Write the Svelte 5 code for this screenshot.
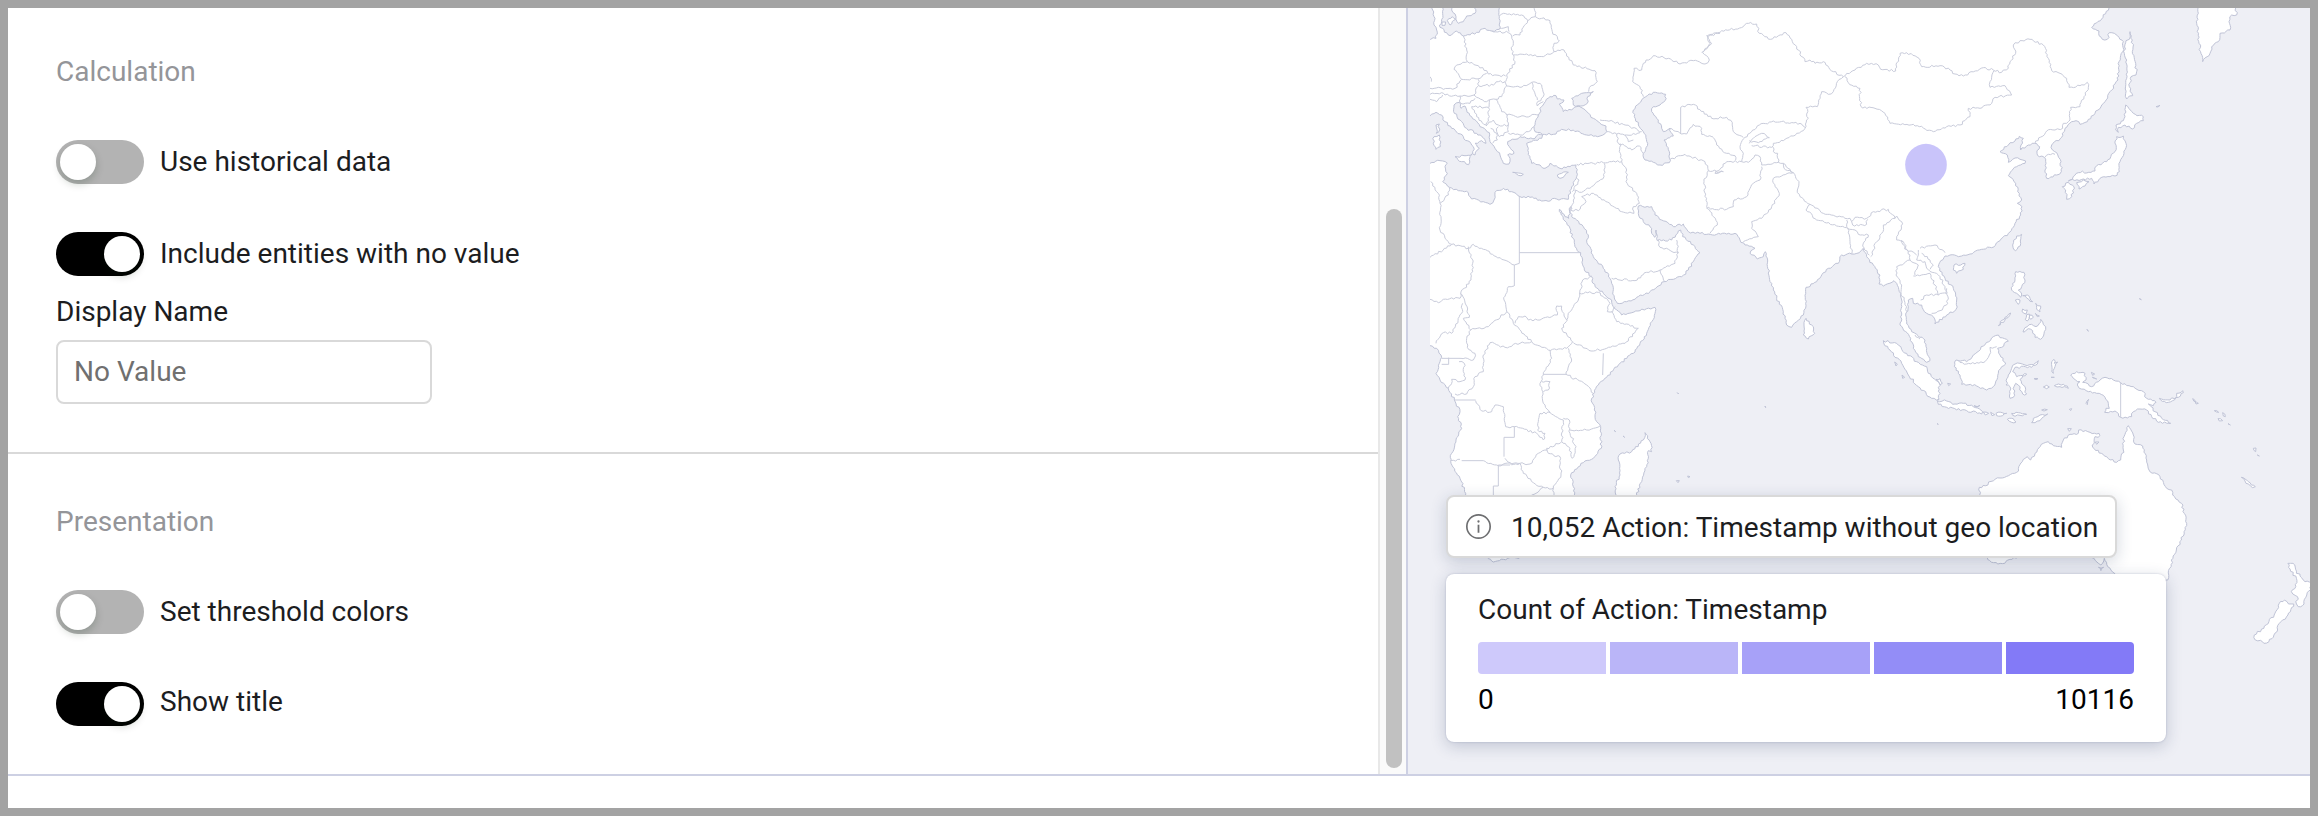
<script>
  // Map outlines are kept per survey sheet; each sheet has its own origin
  // and horizontal scale on the common canvas (3 units per pixel).
  const sheets = {
    nw: [0, 0, 1], n: [1020, 0, 1], ne: [1920, 0, 1],
    w: [0, 720, 1], c: [1020, 720, 1], e: [1920, 720, 1],
    sw: [30, 1440, 1], se: [1260, 1440, 1.0295]
  };

  function points(src) {
    let sheet = sheets.nw;
    const out = [];
    for (const token of src.trim().split(/\s+/)) {
      if (sheets[token]) { sheet = sheets[token]; continue; }
      const [x, y] = token.split(',').map(Number);
      out.push([sheet[0] + x * sheet[2], sheet[1] + y]);
    }
    return out;
  }

  // Adds small natural irregularities to long coast and border segments.
  function roughen(pts, closed) {
    const out = [];
    const total = closed ? pts.length : pts.length - 1;
    for (let i = 0; i < total; i++) {
      const [x1, y1] = pts[i];
      const [x2, y2] = pts[(i + 1) % pts.length];
      out.push([x1, y1]);
      const dx = x2 - x1, dy = y2 - y1, len = Math.hypot(dx, dy);
      if (len < 12 || len > 220) continue;
      const n = Math.floor(len / 6);
      for (let k = 1; k < n; k++) {
        const seed = Math.sin((x1 + y2) * 12.9898 + k * 78.233) * 43758.5453;
        const off = (seed - Math.floor(seed) - 0.5) * 7;
        out.push([x1 + (dx * k) / n - (dy / len) * off, y1 + (dy * k) / n + (dx / len) * off]);
      }
    }
    if (!closed) out.push(pts[pts.length - 1]);
    return out;
  }

  const toPath = (pts, closed) =>
    'M' + pts.map(([x, y]) => `${x.toFixed(1)},${y.toFixed(1)}`).join('L') + (closed ? 'Z' : '');
  const shape = (src) => src.split('|').map((s) => toPath(roughen(points(s), true), true)).join('');
  const lines = (src) => src.split('|').map((s) => toPath(roughen(points(s), false), false)).join('');
  const straight = (src) => src.split('|').map((s) => toPath(points(s), false)).join('');

  const mainland = shape(`nw 150,-60 ne 335,-60 335,0 327,24 305,57 275,82 297,93 297,107 307,118 322,118 328,98 343,100 370,125 368,155 357,185 354,240 335,270 315,305 285,340 262,365 240,373 228,362 215,365 195,385 187,400 185,412 155,435 153,443 170,458 183,485 184,515 170,525 140,535 135,510 138,490 133,472 118,470 111,460 119,440 103,430 85,435 62,450 63,435 70,415 58,409 45,423 25,435 0,455 22,465 25,487 45,474 60,478 77,483 75,490 50,500 25,527 42,545 58,580 65,600 52,610 66,620 62,645 45,670 25,700 0,722
    n 875,743 845,748 810,762 c 785,48 775,50 750,45 735,48 715,80 735,115 760,145 770,180 768,208 740,225 705,252 700,230 680,220 665,195 640,190 638,175 625,180 625,200 617,225 620,245 635,275 650,283 675,300 680,325 690,362 680,367 655,350 640,325 632,295 600,255 605,225 605,180 598,155 590,130 582,122 550,138 537,132 540,105 520,75 500,50 490,25 478,38 455,42 425,45 415,70 385,85 350,125 318,142 317,190 310,225 290,245 275,262 260,255 250,215 230,175 210,125 203,60 196,35 190,50 172,57 150,40 165,25 135,15 120,0
    n 105,700 80,702 50,703 0,700 nw 985,695 970,672 940,680 905,660 885,645 875,620 835,618 835,640 850,665 875,685 875,700 884,712 888,690 892,722 935,720 962,690 968,710 1000,735 1020,758
    w 1000,65 985,90 965,110 940,118 912,125 870,155 830,172 800,185 772,190 765,180 755,130 750,115 730,85 700,50 690,20 680,0 nw 685,705 670,680 650,660 635,650 632,620 626,655 615,650 598,628 604,645 620,668 640,715 w 643,0 645,20 662,38 668,60 673,90 695,110 705,140 730,160 755,180 763,205 785,225 840,212 885,202 885,220 860,280 840,310 820,340 780,370 740,412 715,435 695,475 703,510 710,545 722,560 724,625 700,655 670,668 632,705 640,740 643,765
    sw 600,60 560,150 500,220 440,234 400,238 370,246 355,236 300,150 287,45 w 317,760 300,715 273,670 275,640 288,600 305,565 293,530 300,515 283,480 265,445 240,420 228,400 238,370 243,345 230,325 210,317 150,317`);

  const seas = shape(`nw 180,-20 220,-20 218,30 225,55 222,75 230,90 228,115 212,118 180,118
    |nw 250,-20 248,40 240,82 270,107 290,93 310,108 350,97 375,85 395,93 418,88 418,24 418,-20 345,-20 345,40 320,48 310,65 295,70 288,50 275,30 285,-20
    |nw 180,345 210,348 228,337 245,345 255,365 275,385 310,410 340,440 338,462 345,465 358,445 345,430 365,422 378,430 374,418 350,400 320,385 305,365 283,340 282,315 298,307 303,325 315,318 320,330 335,350 360,380 388,398 390,425 405,445 420,465 430,490 447,492 450,475 443,465 462,460 448,440 443,425 465,418 480,410 500,415 525,415 535,403 548,405 545,415 515,425 500,430 505,445 510,475 515,490 540,495 555,505 570,490 600,505 630,500 648,495 650,530 635,560 625,598 590,597 545,603 510,592 480,590 455,575 430,565 405,577 402,600 390,613 370,605 335,597 325,578 295,572 268,562 248,545 262,520 255,500 262,490 240,482 210,490 180,490
    |nw 522,380 535,345 545,320 570,290 588,287 592,297 612,300 598,312 610,335 650,320 663,322 680,335 700,355 720,370 738,378 740,395 720,408 680,405 640,390 605,388 580,403 547,403 525,395
    |nw 635,295 665,280 700,275 683,290 682,310 662,318 640,315
    |nw 887,277 917,283 915,302 900,315 880,320 875,335 890,355 905,385 910,395 930,385 940,408 912,420 928,455 928,488 900,495 880,487 855,480 850,460 863,430 850,395 835,375 823,350 820,330 845,300 862,287`);

  const islands = shape(`nw 285,470 312,467 336,462 328,478 326,494 305,485|nw 222,410 238,405 241,440 228,448 220,430|nw 228,375 238,372 237,395 229,400|nw 458,517 475,519 490,523 475,526|nw 592,525 605,520 625,517 612,530 600,535|nw 262,62 277,50 287,58 270,75|nw 246,66 257,66 255,76 246,76
    |ne 390,95 397,120 397,155 410,215 408,225 393,230 388,260 398,287 388,288 380,297 377,280 380,235 380,180 373,160 378,122 388,118
    |ne 377,315 400,340 430,350 430,362 410,370 397,387 375,375 355,382 355,397 347,390 348,375 370,362 375,350
    |ne 350,410 370,408 378,430 372,460 360,485 358,515 345,528 330,530 300,535 282,552 275,535 250,537 205,543 235,518 285,513 290,497 320,485 345,455
    |ne 187,560 205,547 222,560 215,590 200,598 197,570|ne 230,548 250,540 267,545 255,558 237,567|ne 50,708 65,703 62,730 47,752 38,735
    |ne 600,-20 595,40 590,70 597,130 608,185 630,160 635,140 655,125 660,100 690,90 687,65 695,45 710,45 707,24 705,-20|ne 468,320 480,316 474,321
    |c 762,75 795,70 790,88 770,100 760,90|c 318,235 335,255 344,280 325,297 310,285 312,255
    |c 550,302 590,310 605,328 650,365 680,380 685,400 718,430 717,478 695,475 655,440 625,405 605,370 570,330 552,312
    |c 712,482 740,483 765,492 790,490 820,500 848,515 845,522 800,512 740,502 715,493
    |c 768,360 800,365 820,345 850,318 880,290 895,285 900,293 925,303 905,322 893,325 900,345 917,372 905,380 895,400 880,440 860,450 830,438 785,433 780,405 763,380
    |c 584,366 592,372 588,378|c 606,405 614,412 608,415|c 708,418 720,416 727,430 720,434|c 743,430 752,432 746,437|c 822,497 840,496 832,500|c 850,516 866,520 856,525|c 872,517 884,524 876,527|c 888,520 920,520 908,527 890,527|c 922,538 940,536 948,546 935,547
    |c 895,257 915,232 932,219 924,233
    |e 35,385 38,376 60,370 75,375 100,374 115,362 112,372 95,382 45,382 38,395 50,410 80,402 60,418 70,435 80,462 68,462 55,435 47,430 42,440 40,472 30,475 30,440 18,435 25,405
    |e 35,520 55,518 80,523 60,526 38,526|e 95,548 100,535 120,525 143,522 125,535 105,548|e 125,510 142,509 132,513
    |e 155,365 162,358 163,370 173,366 165,380 160,400 156,382|e 130,441 140,436 148,441 140,446|e 163,437 190,433 205,445 180,440|e 102,416 114,416 108,419|e 153,412 163,412|e 258,490 266,478 262,494|e 208,508 215,506 212,512|e 274,397 284,402 278,406|e 277,412 290,417
    |e 212,405 230,395 255,400 258,420 248,427 265,432 275,440 300,420 315,412 340,420 362,428 400,440 430,455 440,475 468,487 460,497 445,492 465,515 485,535 512,550 475,547 455,530 440,510 420,507 400,515 395,530 362,532 345,513 325,518 314,517 318,505 328,505 325,490 315,472 290,460 265,455 238,445 232,435 240,425 220,415
    |e 478,475 510,480 530,470 530,460 548,452 550,458 535,472 505,487 487,484
    |e 578,476 595,490 588,492|e 643,512 656,517|e 668,518 676,530 670,528|e 654,536 668,542 658,543|e 684,551 691,555|e 760,625 768,624 767,635|e 772,645 778,648|e 724,712 735,717 766,740 758,743 738,730
    |e 47,95 72,97 75,120 65,140 55,150 65,165 62,172 50,160 35,150 38,130 45,120|e 68,167 82,165 98,185 90,184 80,174|e 46,180 60,180 55,193|e 68,207 82,210 78,222 70,219|e 107,190 122,198 120,216 110,208|e 80,224 88,222 82,243 76,239|e 90,225 100,232 92,238|e 106,220 118,228 112,230
    |e 122,238 128,245 137,260 133,275 122,298 105,292 98,272 85,266 75,275 69,276 75,263 95,253 108,260 118,250
    |e 203,566 214,566 208,574|e 286,606 297,606 290,613
    |e 0,714 50,697 75,655 82,650 92,660 105,640 130,610 145,605 160,617 185,622 190,600 210,583 235,580 236,570 270,577 297,580 295,592 285,590 278,622 320,650 350,667 362,660 370,630 372,590 385,557 400,585 405,612 428,618 440,660 447,690 480,710 500,745 515,750 518,765
    se 1145,45 1170,70 1178,100 1185,130 1170,180 1155,210 1145,235 1135,265 1130,300 1000,320 975,280 955,260 945,235 935,255 915,235 880,215 760,215 670,238 655,250 635,252 605,238 590,180 582,45 c 838,742 845,743 885,718
    |se 928,262 943,262 935,272
    |se 1382,465 1410,445 1440,405 1455,370 1470,360 1482,372 1497,372 1480,405 1455,430 1450,450 1425,485 1410,490 1400,481 1385,480
    |se 1480,250 1495,250 1505,280 1515,282 1520,293 1530,305 1555,305 1535,345 1527,372 1510,380 1505,372 1508,350 1490,335 1503,320 1505,295 1482,262
    |w 855,578 870,605 875,635 865,632 860,680 845,725 830,765 sw 790,80 760,80 740,60 w 768,765 765,740 780,705 775,660 780,642 815,635 850,600
    |w 952,458 956,462|w 762,571 767,575|w 789,588 794,592|w 983,708 990,710 985,713|w 949,722 958,722 954,728|c 195,498 197,503|c 711,551 715,553|e 418,176 424,179|e 261,268 265,274`);

  const borders = lines(`nw 418,48 430,40 485,45 503,62 480,105 458,108|nw 418,85 445,80 447,95|nw 395,93 445,98 455,108 460,130 455,150 465,185 440,225 437,245|nw 524,20 526,50 503,62|nw 526,50 570,62 577,95 598,123 582,130 582,155|nw 460,165 500,162 550,170 582,155 612,150 640,195 705,212 712,245 688,262 686,275
    |nw 310,108 320,150 322,185 355,197 380,212 385,222 437,228|nw 322,185 290,195 282,208 305,238 360,235 380,220|nw 305,238 285,265 250,268 235,262 210,265|nw 355,238 357,258 400,255 415,245 435,245 440,258 425,290 408,298 380,305 350,292 342,285 355,258|nw 210,283 245,278 255,285 300,288 342,285|nw 210,298 230,305 248,285|nw 300,288 302,310 330,310 345,295|nw 440,258 480,262 515,247 545,255 550,290 530,310 532,318 550,305|nw 515,247 532,300|nw 408,298 425,335 440,345 480,350 535,345|nw 335,320 385,322 388,350 378,375 350,350 335,320|nw 388,300 387,322|nw 442,345 445,375 415,375 400,360 378,378|nw 445,375 445,395 418,410 410,395 415,380|nw 445,400 480,405 505,395 522,380|nw 392,385 410,400 412,420 398,430|nw 210,230 214,245
    |nw 720,360 760,365 810,380 845,395|nw 740,395 770,402 800,405 840,398|nw 770,402 775,430 800,440 815,450 838,438 850,460|nw 795,405 805,425 820,420|nw 780,430 778,455 785,485 800,510 798,545 830,580 838,610 820,620 822,640 785,635 700,580 665,590 678,605 655,632 632,630|nw 650,493 700,490 755,485 785,485|nw 733,490 732,530 695,560 665,577 645,570 640,600 632,628|nw 650,535 657,540 637,575
    |nw 850,290 840,260 818,245 822,205 845,210 850,190 880,167 925,175 960,192 1000,182 1035,192 1048,180 1028,158 1050,130 1040,107 1080,100|nw 930,385 965,402 980,402 1000,373 1025,385 1025,403 1055,410 n 35,408 50,435 80,460 105,467 107,480|nw 962,322 1000,313 1055,355 n 35,355 80,352 97,368 100,395 130,412
    |nw 930,478 975,463 1035,485 1045,512 1090,515 n 45,520 80,485 125,485 145,487 165,465 180,470 185,495 235,487|nw 1045,512 1032,545 1040,620 1060,650 1072,675 1050,700|nw 1040,625 n 80,628 100,620 102,600 140,590 160,550 180,540 185,500|n 250,490 280,518 220,535 225,560 238,580 215,620 185,655 155,665 155,685 175,710 130,725
    |n 5,157 35,130 22,108 60,97 130,80 140,70 170,72 178,100 212,118 258,98 290,140 315,185 330,180 345,190 370,185 400,215 430,230 465,210 500,190 535,195 542,208 587,213 600,160 620,158 657,175 665,200 720,197 750,210 765,222 790,228 850,203 880,210 905,217 925,205 930,185 947,160 940,135 960,122 ne 90,118 130,135 145,175 155,212 180,220 200,235 207,262 240,257 262,247 265,262 252,290 240,320 212,322 210,360 200,370 190,370 188,385 165,390 140,393 105,430|ne 135,472 145,463 165,463
    |n 435,230 445,248 480,265 483,320 525,325 555,340 570,370 640,373 700,395 740,380 780,375 810,350 805,325 840,325 875,310 885,292 935,285 915,257 870,262 870,245 882,212
    |n 430,230 412,245 400,275 385,283 365,275 352,320 318,322 325,355 315,385 290,400 250,422 220,430 215,442 155,437|n 315,382 300,370 220,363 178,375 135,412 120,440 130,460 125,485|n 148,430 165,410 185,400 208,413 175,428 148,422|n 218,440 220,455 233,460 235,487 250,490 252,505 280,518 297,545 292,570 300,590 330,613 370,640 435,655 450,655 455,665 465,652 500,655 520,635 565,628 585,655 590,648 605,665 603,690 590,710 590,720 610,725 620,750 650,765|n 330,613 318,630 350,660 440,683|n 440,660 442,685 465,690 475,703 505,705 488,738 508,765|n 455,665 458,675 500,673 503,658|n 443,685 450,725 455,762|n 585,655 550,675 545,700 530,725 520,750 512,770
    |c 605,0 610,15 630,45 630,60 655,75 645,105|c 630,60 600,75 590,80 588,105 605,135 603,155 612,180 620,215|c 655,30 655,45 650,60 675,65 680,85 720,110 735,140 742,160|c 660,25 705,15 735,38|c 640,108 690,100 705,135 715,165 680,165 662,180|c 740,145 743,190 720,212 695,220|c 715,165 740,160|c 665,40 690,60 700,75 690,88|c 645,285 660,297|c 775,362 800,372 855,365 868,345 870,322 890,320
    |nw 212,545 235,580 240,610 243,650 240,690 255,715 275,733 210,773|nw 268,562 265,585 240,610|nw 275,733 325,745 340,733 370,748 425,778 w 463,75|w 325,20 338,70 333,120 302,160 300,175 250,178 235,188 210,178|w 302,160 318,195 328,232 310,235 332,270 320,295 322,322 345,340 340,360 297,355|w 308,190 305,220 275,280 250,278 228,310|w 332,270 385,260 440,215 432,180 445,140 462,138|w 440,215 460,250 515,305 480,310 435,322 390,308 370,345 370,395 345,410 340,440 320,462 285,462|w 465,250 475,230 495,228 505,240 540,240 575,230 592,225 590,198 605,198 607,215 620,240 625,220 655,180 660,150 668,120 695,108|w 515,305 540,318 565,330 620,325 638,305 605,265 622,240|w 658,160 715,157 750,190 742,215 758,215 765,200|w 755,215 770,245 835,265 795,310 740,325 700,333 640,308|w 625,325 635,360 618,403 680,435 700,460|w 570,330 575,355 550,405 540,430 548,455 550,490 570,518 610,540 605,605 625,620 637,655 648,620 630,580 628,540 610,535|w 545,425 570,425 565,450 550,455|w 570,518 540,520 533,570 555,580 550,600 530,580 463,560 437,560 430,500 405,495 395,515 365,513 347,482|w 265,445 275,430 275,418 300,425 315,420 310,395 313,370 297,365|w 630,570 680,570 720,558|w 605,605 560,625 565,640 600,650 603,705 580,745 550,742 515,765|w 550,742 520,728 490,700 480,670 450,668 435,655|w 480,670 510,672 535,640 562,630|w 273,662 300,658|w 370,662 410,675 480,670|w 580,745 582,765|w 755,115 825,122 860,97 900,90 945,70 955,38 900,22 895,0|w 900,90 915,125|w 955,38 950,0`);

  const surveyed = straight(`nw 478,590 478,780 w 478,70 463,75 463,138|w 478,38 662,38|nw 962,322 962,402|w 730,340 728,405|w 550,403 618,403|w 245,355 297,355|w 245,373 266,373 266,353|w 283,480 347,480|w 463,560 463,592 432,592 432,650|w 305,662 370,662|w 415,675 415,738 400,738 400,765|w 415,675 450,675|e 362,428 362,532`);

  const calculation = [
    { label: 'Use historical data', on: false },
    { label: 'Include entities with no value', on: true }
  ];
  const presentation = [
    { label: 'Set threshold colors', on: false },
    { label: 'Show title', on: true, raised: true }
  ];
  const scale = ['#cec9fb', '#bab5f8', '#a7a1f8', '#938df7', '#837af7'];
</script>

{#snippet option(item)}
  <div class="option">
    <span class="switch" class:on={item.on}><span class="knob"></span></span>
    <span class="text" class:raised={item.raised}>{item.label}</span>
  </div>
{/snippet}

<div class="frame">
  <div class="workspace">
    <section class="settings">
      <div class="group first">
        <h2>Calculation</h2>
        <div class="options">
          {#each calculation as item}{@render option(item)}{/each}
        </div>
        <label for="display-name">Display Name</label>
        <input id="display-name" type="text" placeholder="No Value" />
      </div>
      <div class="group">
        <h2>Presentation</h2>
        <div class="options">
          {#each presentation as item}{@render option(item)}{/each}
        </div>
      </div>
    </section>
    <div class="scrollbar"><div class="thumb"></div></div>
    <section class="map">
      <svg class="world" viewBox="144 24 2706 2298" preserveAspectRatio="none">
        <defs><clipPath id="sheet"><rect x="210" y="24" width="2640" height="2298" /></clipPath></defs>
        <g clip-path="url(#sheet)">
          <path class="land" d={mainland} />
          <path class="sea" d={seas} />
          <path class="land" d={islands} />
          <path class="border" d={borders} />
          <path class="border" d={surveyed} />
        </g>
        <circle cx="1698" cy="494" r="62.5" fill="#c9c4fa" />
      </svg>
      <div class="overlays">
        <div class="notice">
          <svg class="info" viewBox="0 0 24 24" fill="none" stroke="#6d6e70">
            <circle cx="12" cy="12" r="11.2" stroke-width="1.6" />
            <path d="M12 10.3V18" stroke-width="1.7" />
            <circle cx="12" cy="7.2" r="1.1" fill="#6d6e70" stroke="none" />
          </svg>
          <span>10,052 Action: Timestamp without geo location</span>
        </div>
        <div class="legend">
          <div class="title">Count of Action: Timestamp</div>
          <div class="scale">
            {#each scale as color}<span style="background:{color}"></span>{/each}
          </div>
          <div class="range"><span>0</span><span>10116</span></div>
        </div>
      </div>
    </section>
  </div>
</div>

<style>
  :global(body) { margin: 0; }
  .frame {
    box-sizing: border-box;
    width: 2318px;
    height: 816px;
    border: 8px solid #a3a3a3;
    background: #fff;
    font: 28px/32px Roboto, sans-serif;
    color: #1c1d1f;
    overflow: hidden;
  }
  .workspace { display: flex; height: 766px; border-bottom: 2px solid #cdd0e3; }
  .settings { width: 1370px; flex: none; }
  .group { box-sizing: border-box; padding: 51px 48px 0; }
  .group.first { height: 446px; padding-top: 47px; border-bottom: 2px solid #d9d9d9; }
  h2 { margin: 0; font-size: 28px; font-weight: 400; line-height: 34px; color: #949599; }
  .options { display: flex; flex-direction: column; gap: 48px; padding-top: 51px; }
  .option { display: flex; align-items: center; gap: 16px; height: 44px; }
  .switch {
    box-sizing: border-box;
    display: flex;
    width: 88px;
    height: 44px;
    padding: 4px;
    border-radius: 22px;
    background: #b3b3b3;
  }
  .switch.on { justify-content: flex-end; background: #000; }
  .knob {
    width: 36px;
    height: 36px;
    border-radius: 50%;
    background: #fff;
    box-shadow: 0 4px 8px rgba(0, 35, 11, 0.2);
  }
  .text { padding-bottom: 1px; }
  .text.raised { padding-bottom: 5px; }
  label { display: block; margin-top: 19px; line-height: 34px; }
  input {
    box-sizing: border-box;
    display: block;
    width: 376px;
    height: 64px;
    margin-top: 11px;
    padding: 0 16px 2px;
    border: 2px solid #d9d9d9;
    border-radius: 8px;
    font: inherit;
    background: #fff;
  }
  input::placeholder { color: #707070; opacity: 1; }
  .scrollbar {
    box-sizing: border-box;
    flex: none;
    width: 28px;
    padding: 201px 4px 6px 6px;
    border-left: 2px solid #e8e8e8;
    background: #fafafa;
  }
  .thumb { width: 16px; height: 559px; border-radius: 8px; background: #c1c1c1; }
  .map {
    box-sizing: border-box;
    position: relative;
    flex: 1;
    border-left: 2px solid #cdd0e3;
    background: #eeeff5;
    overflow: hidden;
  }
  .world { display: block; width: 902px; height: 766px; }
  .land { fill: #fff; stroke: #bfc3d6; stroke-width: 3; }
  .sea { fill: #eeeff5; stroke: #bfc3d6; stroke-width: 3; }
  .border { fill: none; stroke: #c9ccdb; stroke-width: 3; }
  .overlays {
    position: absolute;
    left: 38px;
    bottom: 32px;
    display: flex;
    flex-direction: column;
    align-items: flex-start;
    gap: 16px;
  }
  .notice {
    box-sizing: border-box;
    display: flex;
    align-items: center;
    width: 671px;
    height: 63px;
    gap: 20px;
    padding-left: 18px;
    border: 2px solid #d9d9d9;
    border-radius: 8px;
    background: #fff;
    box-shadow: 0 4px 16px rgba(30, 50, 90, 0.2);
    white-space: nowrap;
  }
  .notice span { padding-top: 2px; }
  .info { width: 25px; height: 25px; }
  .legend {
    box-sizing: border-box;
    width: 720px;
    height: 168px;
    padding: 19px 32px 0;
    border-radius: 8px;
    background: #fff;
    box-shadow: 0 4px 16px rgba(30, 50, 90, 0.22), 0 0 2px rgba(40, 50, 110, 0.25);
  }
  .title { line-height: 34px; }
  .scale {
    display: grid;
    grid-template-columns: repeat(5, 1fr);
    gap: 4px;
    height: 32px;
    margin-top: 15px;
    border-radius: 4px;
    overflow: hidden;
  }
  .range { display: flex; justify-content: space-between; margin-top: 10px; color: #000; }
</style>
